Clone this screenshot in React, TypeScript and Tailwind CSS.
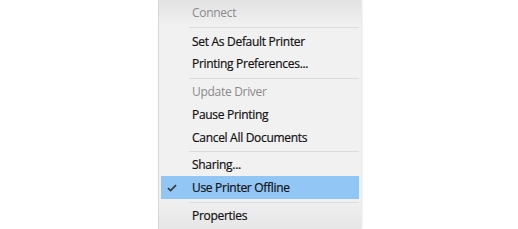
type MenuItem =
  | { kind: "item"; label: string; h: string; disabled?: boolean; checked?: boolean }
  | { kind: "sep"; h: string };

const items: MenuItem[] = [
  { kind: "item", label: "Connect", h: "h-[22px]", disabled: true },
  { kind: "sep", h: "h-[7px]" },
  { kind: "item", label: "Set As Default Printer", h: "h-[22px]" },
  { kind: "item", label: "Printing Preferences...", h: "h-[22px]" },
  { kind: "sep", h: "h-[6px]" },
  { kind: "item", label: "Update Driver", h: "h-[22px]", disabled: true },
  { kind: "item", label: "Pause Printing", h: "h-[23px]" },
  { kind: "item", label: "Cancel All Documents", h: "h-[23px]" },
  { kind: "sep", h: "h-[5px]" },
  { kind: "item", label: "Sharing...", h: "h-[22px]" },
  { kind: "item", label: "Use Printer Offline", h: "h-[23px]", checked: true },
  { kind: "sep", h: "h-[6px]" },
  { kind: "item", label: "Properties", h: "h-[21px]" },
];

function Check() {
  return (
    <svg width="10" height="8" viewBox="0 0 10 8" className="text-[#3a3a3a]">
      <path d="M1 4.2 L3.6 6.6 L9 1.2" fill="none" stroke="currentColor" strokeWidth="1.8" />
    </svg>
  );
}

export default function App() {
  return (
    <div className="flex h-[229px] w-[518px] bg-white pl-[158px]">
      <div
        className="flex w-[203px] flex-col border-l border-[#d8d8d8] bg-[linear-gradient(to_bottom,#e2e2e2_0px,#f1f1f1_26px,#f1f1f1_196px,#e6e6e6_229px)] pt-[2px] pr-[2px] shadow-[1px_0_2px_rgba(0,0,0,0.12)] text-[12px] text-[#111]"
        style={{ fontFamily: '"Open Sans", "Noto Sans", sans-serif' }}
      >
        {items.map((it, i) =>
          it.kind === "sep" ? (
            <div key={i} className={`${it.h} flex items-center pl-[30px]`}>
              <div className="h-px w-full bg-[#dcdcdc]" />
            </div>
          ) : (
            <div
              key={i}
              className={`${it.h} flex items-center ${it.checked ? "ml-[2px] bg-[#92c6f5]" : ""}`}
            >
              <div className={`flex ${it.checked ? "w-[31px] pl-[6px]" : "w-[33px]"} items-center`}>
                {it.checked ? <Check /> : null}
              </div>
              <span
                className={`tracking-[-0.3px] ${it.disabled ? "text-[#8a8a8a]" : "font-medium [-webkit-text-stroke:0.2px_#111]"}`}
              >
                {it.label}
              </span>
            </div>
          )
        )}
      </div>
    </div>
  );
}
